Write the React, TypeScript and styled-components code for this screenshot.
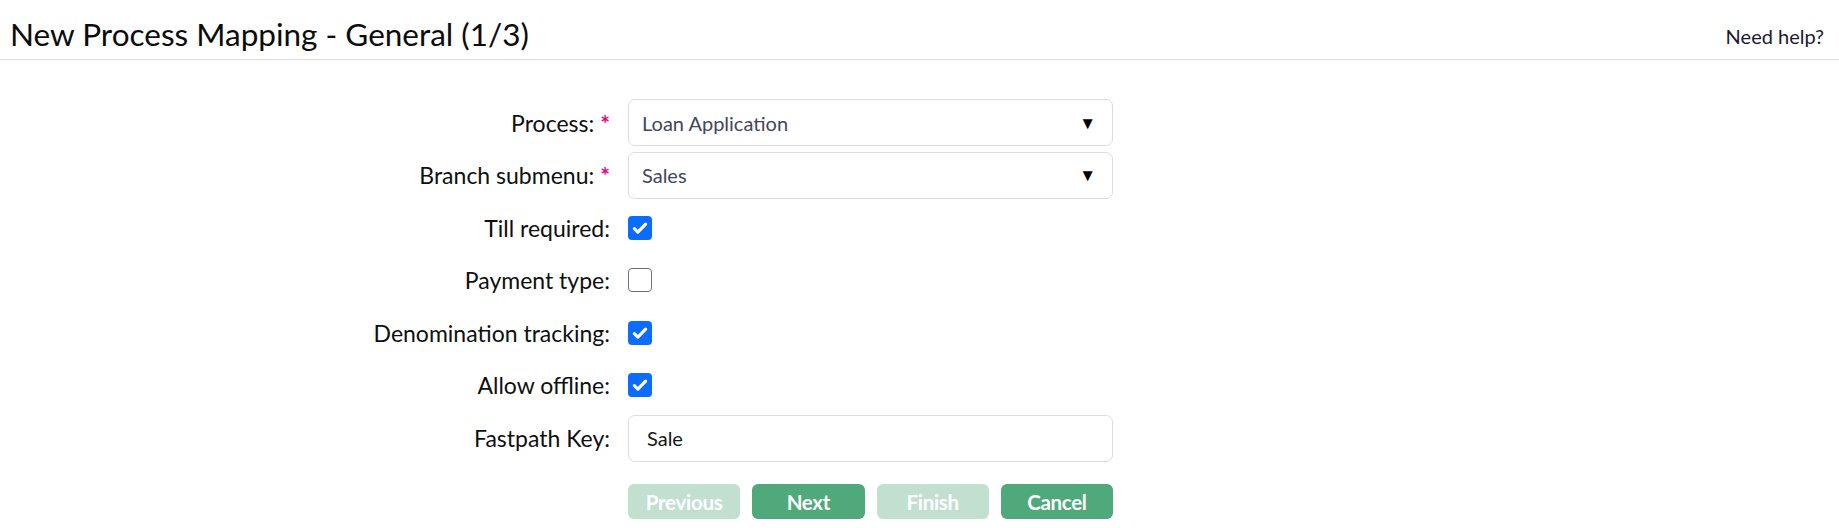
import React from 'react';
import styled, { createGlobalStyle } from 'styled-components';

const GlobalStyle = createGlobalStyle`
	html, body {
		margin: 0;
		padding: 0;
		background: #ffffff;
		font-family: Lato, "Open Sans", sans-serif;
		color: #111111;
	}
`;

const Page = styled.div`
	width: 100%;
	min-height: 528px;
`;

const Header = styled.header`
	height: 60px;
	display: flex;
	align-items: flex-start;
	justify-content: space-between;
	padding: 0 15px 0 10px;
	border-bottom: 1px solid #dddddd;
	box-sizing: border-box;
`;

const Title = styled.h1`
	margin: 0;
	padding-top: 16px;
	font-size: 31.5px;
	line-height: 1.2;
	font-weight: 400;
	color: #0c0c0c;
`;

const HelpLink = styled.a`
	padding-top: 24px;
	font-size: 20px;
	line-height: 1.2;
	color: #1a1a2e;
	text-decoration: none;
`;

const Form = styled.form`
	display: grid;
	grid-template-columns: 610px 485px;
	grid-auto-rows: 47px;
	column-gap: 18px;
	row-gap: 5.6px;
	padding-top: 39px;
	align-items: center;
`;

const Label = styled.label`
	justify-self: end;
	font-size: 23px;
	color: #0f0f0f;
	white-space: nowrap;
`;

const Required = styled.span`
	color: #e6007e;
	font-weight: 700;
	margin-left: 6px;
`;

const Field = styled.div<{ $pad?: number }>`
	height: 47px;
	display: flex;
	align-items: center;
	box-sizing: border-box;
	border: 1px solid #dcdcdc;
	border-radius: 7px;
	padding: 0 16px 0 ${(p) => p.$pad ?? 13}px;
	background: #fff;
`;

const FieldText = styled.span<{ $dark?: boolean }>`
	flex: 1;
	font-size: 20px;
	color: ${(p) => (p.$dark ? '#161616' : '#41465c')};
`;

const Caret = styled.span`
	font-size: 17px;
	color: #000;
`;

const CheckBox = styled.span<{ $checked?: boolean }>`
	width: 24px;
	height: 24px;
	box-sizing: border-box;
	border-radius: 4px;
	display: flex;
	align-items: center;
	justify-content: center;
	background: ${(p) => (p.$checked ? '#0b6cff' : '#fff')};
	border: ${(p) => (p.$checked ? 'none' : '1.5px solid #707070')};
`;

const Buttons = styled.div`
	grid-column: 2;
	display: grid;
	grid-template-columns: repeat(4, 1fr);
	column-gap: 12px;
	margin-top: 17px;
	height: 35px;
	align-self: start;
`;

const Button = styled.button<{ $disabled?: boolean }>`
	height: 35px;
	border: none;
	border-radius: 6px;
	background: #4fa97b;
	opacity: ${(p) => (p.$disabled ? 0.35 : 1)};
	color: #fff;
	font-family: Lato, "Open Sans", sans-serif;
	font-size: 20.5px;
	font-weight: 700;
	letter-spacing: -0.3px;
	padding: 0;
`;

const Check = () => (
	<svg width="18" height="18" viewBox="0 0 16 16">
		<path d="M3 8.6l3.1 3.1L13 4.6" fill="none" stroke="#fff" strokeWidth="2.8" strokeLinecap="round" strokeLinejoin="round" />
	</svg>
);

const checks = [
	{ label: 'Till required:', checked: true },
	{ label: 'Payment type:', checked: false },
	{ label: 'Denomination tracking:', checked: true },
	{ label: 'Allow offline:', checked: true },
];

export default function App() {
	return (
		<Page>
			<GlobalStyle />
			<Header>
				<Title>New Process Mapping - General (1/3)</Title>
				<HelpLink href="#">Need help?</HelpLink>
			</Header>
			<Form onSubmit={(e) => e.preventDefault()}>
				<Label>
					Process:<Required>*</Required>
				</Label>
				<Field>
					<FieldText>Loan Application</FieldText>
					<Caret>▼</Caret>
				</Field>
				<Label>
					Branch submenu:<Required>*</Required>
				</Label>
				<Field>
					<FieldText>Sales</FieldText>
					<Caret>▼</Caret>
				</Field>
				{checks.map((c) => (
					<React.Fragment key={c.label}>
						<Label>{c.label}</Label>
						<CheckBox $checked={c.checked}>{c.checked && <Check />}</CheckBox>
					</React.Fragment>
				))}
				<Label>Fastpath Key:</Label>
				<Field $pad={18}>
					<FieldText $dark>Sale</FieldText>
				</Field>
				<Buttons>
					<Button type="button" $disabled>Previous</Button>
					<Button type="button">Next</Button>
					<Button type="button" $disabled>Finish</Button>
					<Button type="button">Cancel</Button>
				</Buttons>
			</Form>
		</Page>
	);
}
